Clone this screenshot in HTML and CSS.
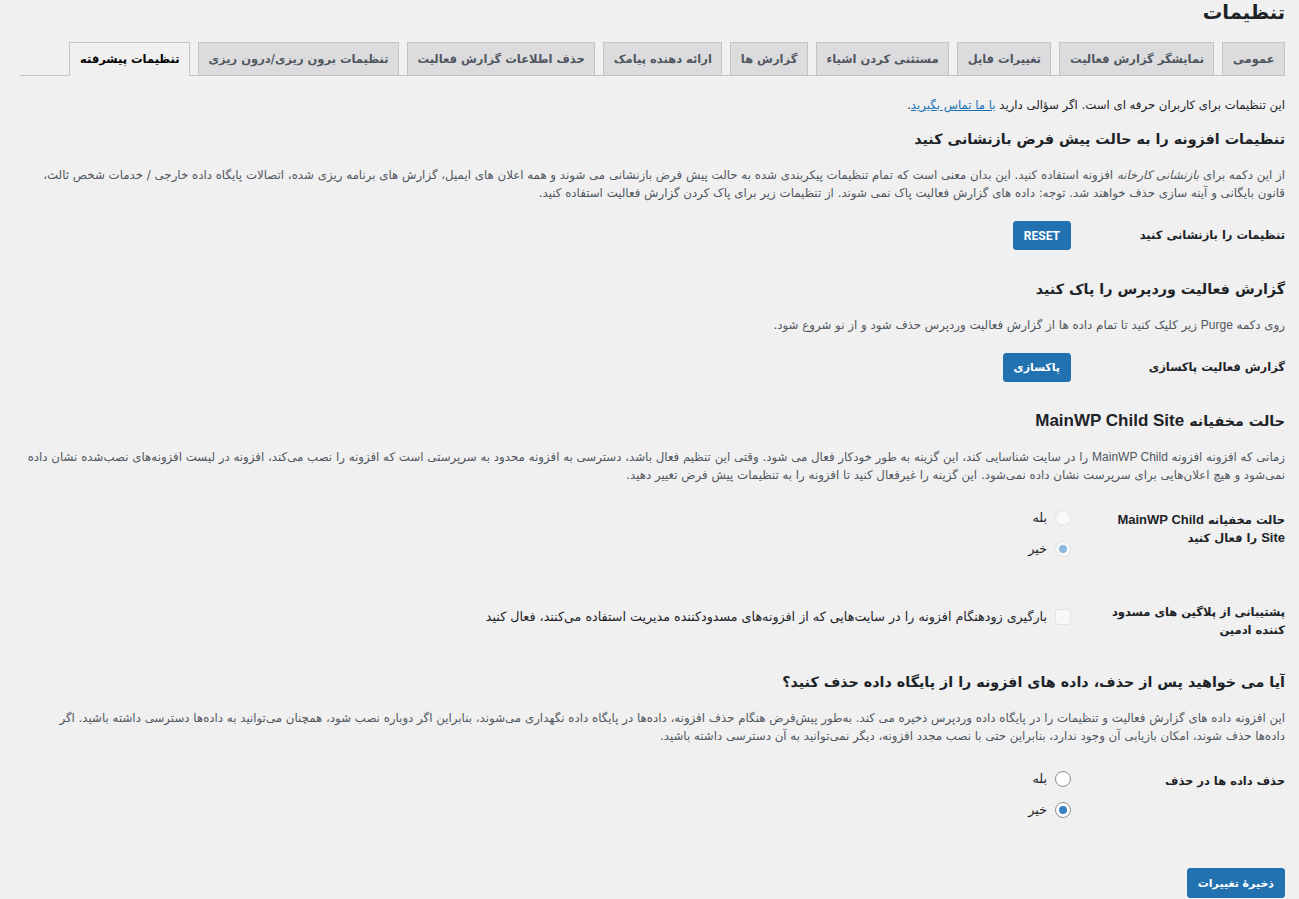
FILE: index.html
```html
<!DOCTYPE html>
<html lang="fa" dir="rtl">
<head>
<meta charset="utf-8">
<title>تنظیمات</title>
<link rel="stylesheet" href="styles.css">
</head>
<body>
<div class="wrap">
  <h1 class="page-title">تنظیمات</h1>
  <nav class="tabs">
    <a class="tab" href="#">عمومی</a>
    <a class="tab" href="#">نمایشگر گزارش فعالیت</a>
    <a class="tab" href="#">تغییرات فایل</a>
    <a class="tab" href="#">مستثنی کردن اشیاء</a>
    <a class="tab" href="#">گزارش ها</a>
    <a class="tab" href="#">ارائه دهنده پیامک</a>
    <a class="tab" href="#">حذف اطلاعات گزارش فعالیت</a>
    <a class="tab" href="#">تنظیمات برون ریزی/درون ریزی</a>
    <a class="tab active" href="#">تنظیمات پیشرفته</a>
  </nav>

  <p class="intro">این تنظیمات برای کاربران حرفه ای است. اگر سؤالی دارید <a class="link" href="#">با ما تماس بگیرید</a>.</p>

  <section class="section">
    <h2 class="section-title">تنظیمات افزونه را به حالت پیش فرض بازنشانی کنید</h2>
    <p class="desc">از این دکمه برای <em>بازنشانی کارخانه</em> افزونه استفاده کنید. این بدان معنی است که تمام تنظیمات پیکربندی شده به حالت پیش فرض بازنشانی می شوند و همه اعلان های ایمیل، گزارش های برنامه ریزی شده، اتصالات پایگاه داده خارجی / خدمات شخص ثالث،<br>قانون بایگانی و آینه سازی حذف خواهند شد. توجه: داده های گزارش فعالیت پاک نمی شوند. از تنظیمات زیر برای پاک کردن گزارش فعالیت استفاده کنید.</p>
    <div class="row">
      <div class="row-label">تنظیمات را بازنشانی کنید</div>
      <div class="row-field"><button class="btn btn-latin" type="button">RESET</button></div>
    </div>
  </section>

  <section class="section">
    <h2 class="section-title">گزارش فعالیت وردپرس را پاک کنید</h2>
    <p class="desc">روی دکمه <span class="latin">Purge</span> زیر کلیک کنید تا تمام داده ها از گزارش فعالیت وردپرس حذف شود و از نو شروع شود.</p>
    <div class="row">
      <div class="row-label">گزارش فعالیت پاکسازی</div>
      <div class="row-field"><button class="btn" type="button">پاکسازی</button></div>
    </div>
  </section>

  <section class="section">
    <h2 class="section-title">حالت مخفیانه <span class="latin">MainWP Child Site</span></h2>
    <p class="desc">زمانی که افزونه افزونه <span class="latin">MainWP Child</span> را در سایت شناسایی کند، این گزینه به طور خودکار فعال می شود. وقتی این تنظیم فعال باشد، دسترسی به افزونه محدود به سرپرستی است که افزونه را نصب می‌کند، افزونه در لیست افزونه‌های نصب‌شده نشان داده<br>نمی‌شود و هیچ اعلان‌هایی برای سرپرست نشان داده نمی‌شود. این گزینه را غیرفعال کنید تا افزونه را به تنظیمات پیش فرض تغییر دهید.</p>
    <div class="row row-choices">
      <div class="row-label">حالت مخفیانه <span class="latin">MainWP Child Site</span> را فعال کنید</div>
      <div class="row-field">
        <div class="choices">
          <label class="choice"><input type="radio" name="stealth" disabled> بله</label>
          <label class="choice"><input type="radio" name="stealth" checked disabled> خیر</label>
        </div>
      </div>
    </div>
    <div class="row row-check">
      <div class="row-label">پشتیبانی از پلاگین های مسدود کننده ادمین</div>
      <div class="row-field">
        <label class="choice check-line"><input type="checkbox" disabled> بارگیری زودهنگام افزونه را در سایت‌هایی که از افزونه‌های مسدودکننده مدیریت استفاده می‌کنند، فعال کنید</label>
      </div>
    </div>
  </section>

  <section class="section">
    <h2 class="section-title">آیا می خواهید پس از حذف، داده های افزونه را از پایگاه داده حذف کنید؟</h2>
    <p class="desc">این افزونه داده های گزارش فعالیت و تنظیمات را در پایگاه داده وردپرس ذخیره می کند. به‌طور پیش‌فرض هنگام حذف افزونه، داده‌ها در پایگاه داده نگهداری می‌شوند، بنابراین اگر دوباره نصب شود، همچنان می‌توانید به داده‌ها دسترسی داشته باشید. اگر<br>داده‌ها حذف شوند، امکان بازیابی آن وجود ندارد، بنابراین حتی با نصب مجدد افزونه، دیگر نمی‌توانید به آن دسترسی داشته باشید.</p>
    <div class="row row-choices">
      <div class="row-label">حذف داده ها در حذف</div>
      <div class="row-field">
        <div class="choices">
          <label class="choice"><input type="radio" name="delete"> بله</label>
          <label class="choice"><input type="radio" name="delete" checked> خیر</label>
        </div>
      </div>
    </div>
  </section>

  <div class="submit"><button class="btn btn-save" type="button">ذخیرهٔ تغییرات</button></div>
</div>
</body>
</html>
```

FILE: styles.css
```css
* { box-sizing: border-box; }
html, body { margin: 0; }
body {
  background: #f0f0f1;
  color: #1d2327;
  font-family: "DejaVu Sans", sans-serif;
  font-size: 13px;
}
.wrap { padding: 0 14px 0 20px; }
.latin { font-family: "Liberation Sans", Arial, sans-serif; }

.page-title {
  margin: 0;
  font-size: 19.5px;
  font-weight: 700;
  line-height: 26px;
  color: #1d2327;
}

.tabs {
  display: flex;
  gap: 8px;
  margin-top: 16px;
  border-bottom: 1px solid #c3c4c7;
}
.tab {
  display: block;
  padding: 4px 9.5px;
  line-height: 24px;
  border: 1px solid #c3c4c7;
  border-bottom: none;
  background: #dcdcde;
  color: #50575e;
  font-weight: 700;
  font-size: 11.5px;
  text-decoration: none;
  white-space: nowrap;
}
.tab.active {
  background: #f0f0f1;
  color: #000;
  margin-bottom: -1px;
  padding-bottom: 5px;
}

.intro {
  margin: 19px 0 0;
  line-height: 20px;
  font-size: 11.7px;
  color: #1d2327;
}
.link { color: #2271b1; text-decoration: underline; }

.section-title {
  margin: 12px 0 0;
  font-size: 14.3px;
  line-height: 24px;
  font-weight: 700;
}
.section-title .latin { font-size: 17px; }
.desc {
  margin: 15px 0 0;
  font-size: 11.8px;
  line-height: 18px;
  color: #50575e;
}
.desc .latin { font-size: 12px; }

.row {
  display: grid;
  grid-template-columns: 214px 1fr;
  margin-top: 4px;
  padding: 15px 0;
}
.row-label {
  min-width: 0;
  padding-top: 5px;
  padding-left: 29px;
  font-weight: 700;
  font-size: 11.5px;
  line-height: 18px;
}
.row-label .latin { font-size: 13px; }
.row-choices .row-label { padding-top: 8px; }
.row-check { margin-top: 9px; margin-bottom: 16px; }
.row-check .row-label { padding-top: 5px; }

.btn {
  height: 29px;
  padding: 0 10px;
  border: 1px solid #2271b1;
  border-radius: 3px;
  background: #2271b1;
  color: #fff;
  font-family: "DejaVu Sans", sans-serif;
  font-size: 11px;
  font-weight: 700;
  cursor: pointer;
}
.btn-latin { font-family: Roboto, "Liberation Sans", sans-serif; font-size: 12px; }

.choices { display: flex; flex-direction: column; gap: 11px; padding-top: 5px; }
.choice {
  display: flex;
  align-items: center;
  gap: 8px;
  min-height: 20px;
  font-size: 12.7px;
  line-height: 18px;
  color: #1d2327;
}
.check-line { margin-top: 9px; }

.choice input {
  appearance: none;
  -webkit-appearance: none;
  flex: none;
  width: 16px;
  height: 16px;
  margin: 0;
  border: 1px solid #8c8f94;
  border-radius: 50%;
  background: #fff;
  display: inline-grid;
  place-content: center;
}
.choice input[type="checkbox"] { border-radius: 4px; }
.choice input:checked::before {
  content: "";
  width: 8px;
  height: 8px;
  border-radius: 50%;
  background: #3582c4;
}
.choice input:disabled {
  border-color: rgba(220, 220, 222, 0.75);
  background: rgba(255, 255, 255, 0.5);
}
.choice input:disabled:checked::before { background: rgba(53, 130, 196, 0.55); }

.submit {
  display: flex;
  margin-top: 33px;
}
.btn-save { height: 30px; }
```
